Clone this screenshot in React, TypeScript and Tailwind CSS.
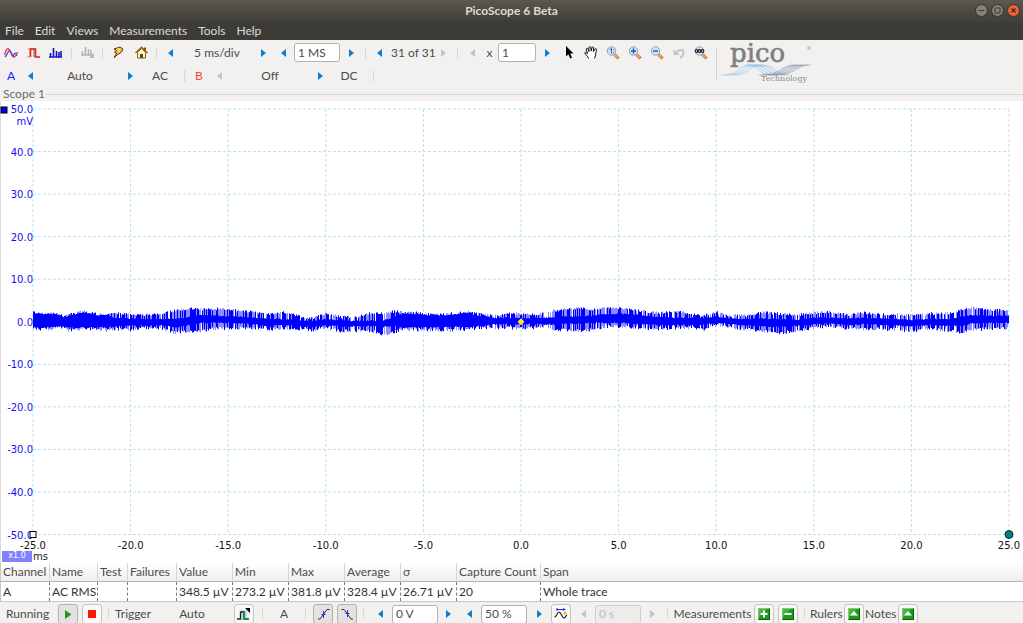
import type { ReactNode } from "react";

const menus = ["File", "Edit", "Views", "Measurements", "Tools", "Help"];

const columns = [
  { title: "Channel", value: "A", width: "w-[49px]" },
  { title: "Name", value: "AC RMS", width: "w-[48px]" },
  { title: "Test", value: "", width: "w-[30px]" },
  { title: "Failures", value: "", width: "w-[49px]" },
  { title: "Value", value: "348.5 µV", width: "w-[56px]" },
  { title: "Min", value: "273.2 µV", width: "w-[56px]" },
  { title: "Max", value: "381.8 µV", width: "w-[56px]" },
  { title: "Average", value: "328.4 µV", width: "w-[56px]" },
  { title: "σ", value: "26.71 µV", width: "w-[56px]" },
  { title: "Capture Count", value: "20", width: "w-[84px]" },
  { title: "Span", value: "Whole trace", width: "" },
];

// position, peak top, peak bottom, core top, core bottom
const envelope = [
  [0, 38, 85, 40, 82], [31, 38, 88, 42, 80], [66, 40, 86, 42, 78], [91, 48, 80, 52, 76],
  [106, 42, 92, 48, 80], [151, 32, 86, 38, 80], [191, 42, 88, 46, 80], [221, 42, 92, 46, 80],
  [246, 38, 86, 54, 76], [291, 42, 90, 56, 74], [341, 44, 84, 58, 74], [381, 40, 84, 58, 72],
  [421, 32, 98, 58, 80], [471, 25, 95, 52, 72], [501, 28, 94, 46, 66], [551, 26, 84, 48, 66],
  [591, 28, 88, 50, 66], [641, 34, 84, 52, 68], [701, 42, 88, 56, 76], [751, 36, 86, 58, 72],
  [801, 48, 88, 62, 76], [831, 55, 92, 64, 78], [876, 40, 84, 58, 74], [921, 50, 94, 62, 76],
  [971, 50, 92, 64, 76], [1011, 38, 92, 62, 76], [1051, 40, 104, 62, 78], [1081, 34, 98, 52, 76],
  [1106, 36, 86, 42, 80], [1141, 34, 90, 42, 80], [1171, 42, 90, 44, 78], [1241, 42, 92, 46, 78],
  [1301, 34, 88, 40, 78], [1331, 40, 84, 48, 76], [1381, 46, 84, 54, 70], [1431, 40, 84, 54, 70],
  [1466, 42, 84, 56, 70], [1521, 42, 82, 54, 70], [1561, 32, 88, 52, 72], [1601, 26, 90, 50, 68],
  [1641, 24, 94, 50, 68], [1681, 28, 88, 48, 66], [1721, 22, 80, 42, 66], [1771, 26, 80, 42, 66],
  [1821, 32, 86, 46, 70], [1871, 38, 86, 52, 72], [1941, 34, 84, 54, 72], [1981, 44, 84, 54, 72],
  [2011, 46, 88, 54, 72], [2051, 36, 76, 50, 66], [2091, 46, 82, 56, 70], [2141, 46, 88, 58, 74],
  [2186, 36, 94, 56, 76], [2231, 40, 100, 58, 78], [2291, 44, 92, 60, 76], [2341, 38, 84, 54, 70],
  [2391, 34, 78, 54, 68], [2441, 44, 86, 56, 72], [2491, 38, 86, 54, 70], [2541, 42, 88, 56, 72],
  [2591, 42, 88, 58, 74], [2641, 46, 94, 60, 76], [2691, 40, 88, 58, 72], [2741, 40, 92, 58, 74],
  [2781, 30, 98, 52, 76], [2811, 22, 92, 46, 68], [2861, 28, 86, 48, 66], [2928, 30, 86, 48, 66],
];

function buildTrace() {
  let seed = 11;
  const rand = () => {
    seed = (seed * 16807) % 2147483647;
    return seed / 2147483647;
  };
  let dark = "";
  let light = "";
  let k = 0;
  for (let x = 0; x < 2928; x += 3) {
    while (k < envelope.length - 2 && envelope[k + 1][0] <= x) k++;
    const a = envelope[k];
    const b = envelope[k + 1];
    const t = (x - a[0]) / (b[0] - a[0]);
    const at = (i: number) => a[i] + (b[i] - a[i]) * t;
    const top = Math.round(at(1) + rand() * 8 - 4);
    const bottom = Math.round(at(2) - rand() * 10 + 4);
    const cx = x + 1.5;
    const kind = rand();
    if (kind < 0.46) {
      dark += `M${cx} ${top}V${bottom}`;
    } else {
      dark += `M${cx} ${Math.round(at(3) - rand() * 3)}V${Math.round(at(4) + rand() * 4)}`;
      if (kind < 0.9) light += `M${cx} ${top}V${bottom}`;
    }
  }
  return { dark, light };
}

const trace = buildTrace();
const ticks = [0, 1, 2, 3, 4, 5, 6, 7, 8, 9, 10];

function Arrow({ dir, width, label, off }: { dir: "left" | "right"; width: string; label: string; off?: boolean }) {
  return (
    <button aria-label={label} disabled={off} className={`flex h-5 shrink-0 items-center justify-center ${width}`}>
      <svg width="5" height="8" viewBox="0 0 5 8" fill={off ? "#c3c3c3" : "#0a7fd0"}>
        <path d={dir === "left" ? "M5 0V8L0 4Z" : "M0 0V8L5 4Z"} />
      </svg>
    </button>
  );
}

function Sep({ width }: { width: string }) {
  return (
    <div className={`flex shrink-0 justify-center ${width}`}>
      <div className="h-3 w-px bg-[#dbd9d7]" />
    </div>
  );
}

function Tool({ label, width = "w-[22px]", children }: { label: string; width?: string; children: ReactNode }) {
  return (
    <button aria-label={label} title={label} className={`flex h-5 shrink-0 items-center justify-center ${width}`}>
      {children}
    </button>
  );
}

function Choice({ width, color = "", children }: { width: string; color?: string; children: ReactNode }) {
  return <button className={`shrink-0 whitespace-nowrap text-center ${width} ${color}`}>{children}</button>;
}

function Field({ label, value, size, off }: { label: string; value: string; size: string; off?: boolean }) {
  return (
    <input
      aria-label={label}
      defaultValue={value}
      disabled={off}
      className={`h-[19px] shrink-0 rounded-[3px] border px-[3px] ${size} ${
        off ? "border-[#d0cecc] bg-[#eeedec] text-[#bdbbb9]" : "border-[#b4b1ae] bg-white"
      }`}
    />
  );
}

function BarButton({ label, pressed, children }: { label: string; pressed?: boolean; children: ReactNode }) {
  return (
    <button
      aria-label={label}
      title={label}
      className={`flex size-5 shrink-0 items-center justify-center rounded-[3px] border ${
        pressed ? "border-[#b4b1ae] bg-[#e4e2e0]" : "border-[#c6c3c0] bg-[#f8f8f7]"
      }`}
    >
      {children}
    </button>
  );
}

function Lens({ children }: { children?: ReactNode }) {
  return (
    <svg width="14" height="14" viewBox="0 0 14 14">
      <path d="M8.5 8.5L12.5 12.5" stroke="#a85b2b" strokeWidth="3" />
      <path d="M8.5 8.5L12 12" stroke="#f2a365" strokeWidth="2" />
      <circle cx="5.5" cy="5" r="4.2" fill="#cfe3f8" stroke="#8aa0bd" />
      {children}
    </svg>
  );
}

function GreenIcon({ d }: { d: string }) {
  return (
    <svg width="12" height="12" viewBox="0 0 12 12">
      <rect width="12" height="12" fill="#0a5c0a" />
      <path d="M0 0H12L11 1H1V11L0 12Z" fill="#7fce72" />
      <rect x="1" y="1" width="10" height="10" fill="#1c9a1c" />
      <path d="M1 1H9L1 9Z" fill="#45b53d" />
      <path d={d} fill="#fff" />
    </svg>
  );
}

function TitleBar() {
  return (
    <header className="bg-linear-to-b from-[#5b584f] to-[#3c3b37] to-60% text-[#dfdbd2]">
      <div className="flex h-[21px] items-center">
        <div className="w-[52px]" />
        <h1 className="flex-1 text-center font-bold">PicoScope 6 Beta</h1>
        <div className="flex w-[52px] gap-[3px] pl-1">
          <button aria-label="Minimize">
            <svg width="13" height="13" viewBox="0 0 13 13">
              <circle cx="6.5" cy="6.5" r="6" fill="#84827b" stroke="#34332f" />
              <path d="M3.5 6.5H9.5" stroke="#3c3b37" />
            </svg>
          </button>
          <button aria-label="Maximize">
            <svg width="13" height="13" viewBox="0 0 13 13">
              <circle cx="6.5" cy="6.5" r="6" fill="#84827b" stroke="#34332f" />
              <path d="M4 4H9V9H4Z" fill="none" stroke="#3c3b37" />
            </svg>
          </button>
          <button aria-label="Close">
            <svg width="13" height="13" viewBox="0 0 13 13">
              <circle cx="6.5" cy="6.5" r="6" fill="#ee6135" stroke="#34332f" />
              <path d="M4.5 4.5L8.5 8.5M8.5 4.5L4.5 8.5" stroke="#4a2415" strokeWidth="1.3" />
            </svg>
          </button>
        </div>
      </div>
      <nav className="flex h-[19px] items-center gap-[11px] px-[5px]">
        {menus.map((m) => (
          <button key={m}>{m}</button>
        ))}
      </nav>
    </header>
  );
}

function Logo() {
  return (
    <svg width="96" height="44" viewBox="0 0 96 44" className="overflow-visible" role="img" aria-label="pico Technology">
      <g fill="none" strokeWidth="0.7">
        {[0, 1, 2, 3, 4].map((i) => (
          <path key={i} d={`M${i * 3} 34C${20 + i * 3} 34 ${14 + i * 3} 24 ${30 + i * 3} 24`} stroke="#a9cdec" />
        ))}
        {[0, 1, 2, 3, 4].map((i) => (
          <path key={i} d={`M${24 + i * 4} 24C${40 + i * 4} 24 ${36 + i * 4} 34 ${52 + i * 4} 34`} stroke="#8db9de" />
        ))}
        {[0, 1, 2, 3, 4, 5].map((i) => (
          <path key={i} d={`M${38 + i * 3} 34C${62 + i * 3} 34 ${58 + i * 3} 24 ${75 + i * 3} 24`} stroke="#8fa0b4" />
        ))}
      </g>
      <text
        x="9"
        y="21"
        fontSize="26"
        fill="#7d7f82"
        stroke="#7d7f82"
        strokeWidth="0.6"
        fontFamily="DejaVu Serif, serif"
      >
        pico
      </text>
      <circle cx="88" cy="7" r="1.3" fill="none" stroke="#999" strokeWidth="0.7" />
      <text x="40" y="40" fontSize="8" fill="#8d8f92" fontFamily="DejaVu Serif, serif">
        Technology
      </text>
    </svg>
  );
}

function Toolbar() {
  return (
    <div className="flex h-[47px] pt-px">
      <div>
        <div className="flex h-[23px] items-center">
          <Tool label="Scope mode">
            <svg width="14" height="10" viewBox="0 0 14 10" fill="none" strokeWidth="1.3">
              <path d="M0.5 7C3 -2 5 0 7 5S11 11 13.5 4" stroke="#e33" />
              <path d="M1 9C4 6 4 2 6 3S8 9 9 8S11 2 13 8" stroke="#3a4be0" />
            </svg>
          </Tool>
          <Tool label="Persistence mode">
            <svg width="13" height="10" viewBox="0 0 13 10" fill="none">
              <path d="M6 1H9V9H6Z" fill="#9fb0b8" />
              <path d="M0 9H3V1M0.5 1H8" stroke="#f0837c" />
              <path d="M3.5 9V1H8.5V9H13" stroke="#e8190f" strokeWidth="1.5" />
            </svg>
          </Tool>
          <Tool label="Spectrum mode" width="w-[23px]">
            <svg width="13" height="10" viewBox="0 0 13 10" stroke="#1414c8" strokeWidth="1.6">
              <path d="M0 9H13M1.5 9V5M4.5 9V0M7.5 9V3M10 9V4M12 9V3" />
            </svg>
          </Tool>
          <Sep width="w-[9px]" />
          <Tool label="Spectrum options" width="w-[23px]">
            <svg width="14" height="13" viewBox="0 0 14 13" stroke="#b5b5b5" strokeWidth="1.6">
              <path d="M0 9H11M1.5 9V5M4.5 9V1M7.5 9V3M10 9V4" />
              <path d="M13 7V12H8Z" fill="#b5b5b5" stroke="none" />
            </svg>
          </Tool>
          <Sep width="w-[7px]" />
          <Tool label="Auto setup" width="w-[24px]">
            <svg width="12" height="13" viewBox="0 0 12 13">
              <path d="M2 3L8 1L11 3L9.5 6L5 9L2 12L4.5 7L2.5 6L5 4Z" fill="#f6b733" stroke="#5a3a08" />
              <path d="M4 3.5L8 2.5L6 5.5L8 5" fill="none" stroke="#ffe79a" />
            </svg>
          </Tool>
          <Tool label="Home">
            <svg width="13" height="13" viewBox="0 0 13 13">
              <path d="M9 1.5H11V5H9Z" fill="#a63a1b" />
              <path d="M2.5 6.5L6.5 2.5L10.5 6.5V12H2.5Z" fill="#fff3bf" stroke="#8b6413" />
              <path d="M0.5 7L6.5 1.2L12.5 7" fill="none" stroke="#8f6a1c" strokeWidth="1.5" />
              <path d="M5 8H8V12H5Z" fill="#5b4a2a" />
            </svg>
          </Tool>
          <Sep width="w-[8px]" />
          <Arrow dir="left" width="w-[21px]" label="Shorter timebase" />
          <Choice width="w-[72px]">5 ms/div</Choice>
          <Arrow dir="right" width="w-[20px]" label="Longer timebase" />
          <Arrow dir="left" width="w-[21px]" label="Fewer samples" />
          <Field label="Number of samples" value="1 MS" size="w-[46px]" />
          <Arrow dir="right" width="w-[22px]" label="More samples" />
          <Sep width="w-[6px]" />
          <Arrow dir="left" width="w-[23px]" label="Previous buffer" />
          <Choice width="w-[43px]">31 of 31</Choice>
          <Arrow dir="right" width="w-[18px]" label="Next buffer" off />
          <Sep width="w-[11px]" />
          <Arrow dir="left" width="w-[18px]" label="Zoom factor down" off />
          <span className="w-[17px] text-center">x</span>
          <Field label="Zoom factor" value="1" size="w-[38px]" />
          <Arrow dir="right" width="w-[22px]" label="Zoom factor up" />
          <Tool label="Normal selection tool">
            <svg width="9" height="13" viewBox="0 0 9 13">
              <path d="M1 0V10.5L3.3 8.3L5.2 12.5L7 11.7L5.2 7.6H8.5Z" fill="#000" />
            </svg>
          </Tool>
          <Tool label="Hand tool">
            <svg width="14" height="13" viewBox="0 0 14 13" fill="#fff" stroke="#111">
              <path d="M4.5 12.5C4 10 1 8.5 0.8 6.7C1.5 5.5 3 7 3.5 7.7L2.2 3.2C2.5 1.8 3.7 2 4.2 3.3L5 5.5L4.8 1.5C5.2 0.3 6.6 0.4 6.8 1.6L7.2 5L8 1.5C8.5 0.5 9.7 0.8 9.6 2L9.4 5.5L11 3C12 2.3 12.9 3 12.5 4.2C11.5 7 12.2 8.5 10.5 12.5" />
            </svg>
          </Tool>
          <Tool label="Zoom window">
            <Lens>
              <path d="M3.5 3.5L5.5 2.5V7.500M7.500 3V4M7.500 6V7" fill="none" stroke="#3d66a5" />
            </Lens>
          </Tool>
          <Tool label="Zoom in">
            <Lens>
              <path d="M3 5H8M5.5 2.5V7.5" stroke="#2855b0" strokeWidth="1.4" />
            </Lens>
          </Tool>
          <Tool label="Zoom out">
            <Lens>
              <path d="M3 5H8" stroke="#2855b0" strokeWidth="1.4" />
            </Lens>
          </Tool>
          <Tool label="Undo zoom">
            <svg width="12" height="12" viewBox="0 0 12 12">
              <path d="M3 6C6 2 11 2 10.5 6C10.3 8 9 10 7 11" fill="none" stroke="#c4c4c4" strokeWidth="2" />
              <path d="M0.5 2V8H6.5Z" fill="#c4c4c4" />
            </svg>
          </Tool>
          <Tool label="Zoom to full view">
            <Lens>
              <g fill="#fff" stroke="#222" strokeWidth="1.2">
                <circle cx="2.5" cy="5" r="1.300" />
                <circle cx="5.5" cy="5" r="1.300" />
                <circle cx="8.5" cy="5" r="1.300" />
              </g>
            </Lens>
          </Tool>
        </div>
        <div className="flex h-[23px] items-center">
          <Choice width="w-[22px]" color="text-[#1a1aff]">A</Choice>
          <Arrow dir="left" width="w-[17px]" label="Channel A range down" />
          <Choice width="w-[82px]">Auto</Choice>
          <Arrow dir="right" width="w-[19px]" label="Channel A range up" />
          <Choice width="w-[40px]">AC</Choice>
          <Sep width="w-[8px]" />
          <Choice width="w-[22px]" color="text-[#ff4040]">B</Choice>
          <Arrow dir="left" width="w-[19px]" label="Channel B range down" off />
          <Choice width="w-[82px]">Off</Choice>
          <Arrow dir="right" width="w-[18px]" label="Channel B range up" />
          <Choice width="w-[40px]">DC</Choice>
          <Sep width="w-[8px]" />
        </div>
      </div>
      <div className="mx-1 my-2 w-px bg-[#d6d4d2]" />
      <Logo />
    </div>
  );
}

function Scope() {
  return (
    <main className="flex min-h-[240px] flex-1 flex-col border-l border-[#dddbd9] bg-white pt-2">
      <div className="ml-8 mr-[14px] flex min-h-0 flex-1">
        <svg
          className="h-full w-full overflow-visible text-[10px]"
          fontFamily="DejaVu Sans, sans-serif"
          role="img"
          aria-label="Channel A trace"
        >
          <g stroke="#bfe0ea" strokeDasharray="3 2">
            {ticks.map((t) => (
              <line key={t} x1="0" x2="100%" y1={`${t * 10}%`} y2={`${t * 10}%`} />
            ))}
            {ticks.map((t) => (
              <line key={t} y1="0" y2="100%" x1={`${t * 10}%`} x2={`${t * 10}%`} />
            ))}
          </g>
          {ticks.map((t) => (
            <text key={t} x="0" y={`${t * 10}%`} dy="4" textAnchor="end" fill="#1212f0">
              {(50 - t * 10).toFixed(1)}
            </text>
          ))}
          <text x="0" y="0" dy="16" textAnchor="end" fill="#1212f0">
            mV
          </text>
          {ticks.map((t) => (
            <text key={t} x={`${t * 10}%`} y="100%" dy="14" textAnchor="middle" fill="#111">
              {(t * 5 - 25).toFixed(1)}
            </text>
          ))}
          <svg width="100%" height="100%" viewBox="0 -573 2928 1275" preserveAspectRatio="none">
            <path d={trace.light} stroke="#8c8cff" strokeWidth="3" />
            <path d={trace.dark} stroke="#0000ff" strokeWidth="3" />
          </svg>
          <svg x="50%" y="50%" className="overflow-visible">
            <path d="M0 -3.5L3.5 0L0 3.5L-3.5 0Z" fill="#ffee00" />
          </svg>
          <rect x="-32" y="-2" width="6" height="6" fill="#0000ff" stroke="#000" />
          <svg y="100%" className="overflow-visible">
            <rect x="-3" y="-3" width="6" height="6" fill="#fff" stroke="#000" />
          </svg>
          <circle cx="100%" cy="100%" r="4" fill="#008080" stroke="#0b2b2b" />
        </svg>
      </div>
      <div className="flex h-7 shrink-0 items-end gap-px pb-px">
        <div className="ml-px flex h-[11px] w-[30px] items-center justify-center bg-[#8080ff] font-[DejaVu_Sans,sans-serif] text-[8px] leading-none text-white">
          x1.0
        </div>
        <div className="font-[DejaVu_Sans,sans-serif] text-[10px] leading-[10px] text-[#222]">ms</div>
      </div>
    </main>
  );
}

function MeasurementsTable() {
  return (
    <table className="w-full table-fixed border-collapse whitespace-nowrap border-b border-l border-[#c9c7c5] bg-white text-left">
      <thead className="bg-linear-to-b from-white to-[#ededec]">
        <tr className="h-[19px] border-b border-[#b5b3b1]">
          {columns.map((c) => (
            <th key={c.title} className={`border-r border-[#d8d6d4] p-0 pl-[2px] font-normal last:border-r-0 ${c.width}`}>
              {c.title}
            </th>
          ))}
        </tr>
      </thead>
      <tbody>
        <tr className="h-5 text-[#333]">
          {columns.map((c) => (
            <td key={c.title} className="border-r border-dashed border-[#777] p-0 pl-[2px] last:border-r-0">
              {c.value}
            </td>
          ))}
        </tr>
      </tbody>
    </table>
  );
}

function StatusBar() {
  return (
    <footer className="flex h-[21px] shrink-0 items-start overflow-hidden pt-[2px] leading-5">
      <span className="w-[58px] pl-[6px]">Running</span>
      <BarButton label="Start" pressed>
        <svg width="7" height="9" viewBox="0 0 7 9">
          <path d="M0 0V9L6.5 4.5Z" fill="#1f9a1f" />
        </svg>
      </BarButton>
      <div className="w-1" />
      <BarButton label="Stop">
        <svg width="8" height="8">
          <rect width="8" height="8" fill="#ff1408" />
        </svg>
      </BarButton>
      <div className="flex h-5 items-center">
        <Sep width="w-[12px]" />
      </div>
      <span className="w-[54px] pl-px">Trigger</span>
      <Choice width="w-[48px]">Auto</Choice>
      <div className="w-[18px]" />
      <BarButton label="Advanced triggering">
        <svg width="14" height="13" viewBox="0 0 14 13" fill="none">
          <rect x="4" y="2" width="6" height="10" fill="#b9dcf0" />
          <path d="M0 11H3.5V4H7V11H12" stroke="#222" strokeWidth="1.3" />
          <path d="M7 4V11H12" stroke="#18992c" strokeWidth="1.5" />
          <path d="M8 0H13V5Z" fill="#000" />
        </svg>
      </BarButton>
      <div className="flex h-5 items-center">
        <Sep width="w-[16px]" />
        <Choice width="w-[28px]">A</Choice>
        <Sep width="w-[15px]" />
      </div>
      <BarButton label="Rising edge" pressed>
        <svg width="13" height="12" viewBox="0 0 13 12" fill="none">
          <path d="M1 11H3L10 1.5H12.5" stroke="#333" />
          <path d="M6.5 3V10M4.5 6.5H8.5" stroke="#2828e8" />
        </svg>
      </BarButton>
      <div className="w-1" />
      <BarButton label="Falling edge" pressed>
        <svg width="13" height="12" viewBox="0 0 13 12" fill="none">
          <path d="M0.5 1.5H3L10 11H12" stroke="#333" />
          <path d="M6.5 2V9M4.5 5.5H8.5" stroke="#2828e8" />
        </svg>
      </BarButton>
      <div className="flex h-5 items-center">
        <Sep width="w-[12px]" />
        <Arrow dir="left" width="w-[23px]" label="Threshold down" />
        <Field label="Threshold" value="0 V" size="w-[46px]" />
        <Arrow dir="right" width="w-[20px]" label="Threshold up" />
        <Arrow dir="left" width="w-[23px]" label="Pre-trigger down" />
        <Field label="Pre-trigger" value="50 %" size="w-[46px]" />
        <Arrow dir="right" width="w-[24px]" label="Pre-trigger up" />
      </div>
      <BarButton label="Enable post-trigger delay">
        <svg width="14" height="12" viewBox="0 0 14 12" fill="none">
          <path d="M0.5 9C3 9 3 4 5 4S8 10 10 10S11 8 13 7" stroke="#222" strokeWidth="1.2" />
          <path d="M3 1.5H11M3 0V3" stroke="#2424e0" />
          <path d="M9 0L12 1.5L9 3Z" fill="#2424e0" />
          <circle cx="11" cy="5" r="1.5" fill="#e8b820" />
        </svg>
      </BarButton>
      <div className="flex h-5 items-center">
        <Arrow dir="left" width="w-[24px]" label="Delay down" off />
        <Field label="Post-trigger delay" value="0 s" size="w-[46px]" off />
        <Arrow dir="right" width="w-[22px]" label="Delay up" off />
        <Sep width="w-[8px]" />
      </div>
      <span className="w-[83px] text-center">Measurements</span>
      <BarButton label="Add measurement">
        <GreenIcon d="M5 2.5H7V5H9.5V7H7V9.5H5V7H2.5V5H5Z" />
      </BarButton>
      <div className="w-1" />
      <BarButton label="Delete measurement">
        <GreenIcon d="M2.5 5H9.5V7H2.5Z" />
      </BarButton>
      <div className="flex h-5 items-center">
        <Sep width="w-[12px]" />
      </div>
      <span className="w-[34px]">Rulers</span>
      <BarButton label="Show rulers">
        <GreenIcon d="M6 3L10 7.5H2Z" />
      </BarButton>
      <span className="w-[34px] pl-px">Notes</span>
      <BarButton label="Show notes">
        <GreenIcon d="M6 3L10 7.5H2Z" />
      </BarButton>
    </footer>
  );
}

export default function App() {
  return (
    <div className="flex h-screen flex-col overflow-hidden bg-[#f2f1f0] font-[Lato,sans-serif] text-[12px] leading-4 text-[#4c4c4c]">
      <TitleBar />
      <Toolbar />
      <div className="flex h-[14px] shrink-0 items-center gap-px pl-[3px] text-[#6a6a6a]">
        <h2>Scope 1</h2>
        <div className="h-px flex-1 bg-[#d6d4d2]" />
      </div>
      <Scope />
      <MeasurementsTable />
      <StatusBar />
    </div>
  );
}
